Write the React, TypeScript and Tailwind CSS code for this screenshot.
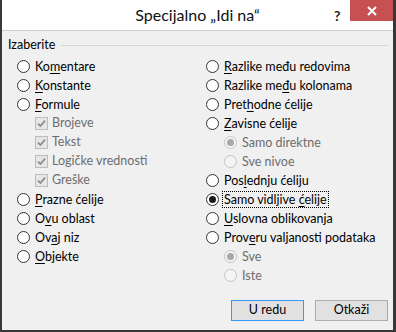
import type { ReactNode } from 'react';

const FONT = { fontFamily: '"Segoe UI", Lato, "Noto Sans", sans-serif' };

function Etiketa({ tekst, podvuci, onemoguceno }: { tekst: string; podvuci?: number; onemoguceno?: boolean }) {
  if (podvuci === undefined || onemoguceno) return <span>{tekst}</span>;
  return (
    <span>
      {tekst.slice(0, podvuci)}
      <span className="underline underline-offset-2">{tekst.slice(podvuci, podvuci + 1)}</span>
      {tekst.slice(podvuci + 1)}
    </span>
  );
}

function Radio({
  tekst,
  podvuci,
  izabrano = false,
  onemoguceno = false,
  fokus = false,
}: {
  tekst: string;
  podvuci?: number;
  izabrano?: boolean;
  onemoguceno?: boolean;
  fokus?: boolean;
}) {
  return (
    <div className="flex h-[19px] items-center">
      <div
        className={`flex h-[13px] w-[13px] shrink-0 items-center justify-center rounded-full border ${
          onemoguceno ? 'border-[#c4c4c4] bg-[#f4f4f4]' : 'border-[#333333] bg-white'
        }`}
      >
        {izabrano && (
          <div className={`h-[7px] w-[7px] rounded-full ${onemoguceno ? 'bg-[#a8a8a8]' : 'bg-[#1a1a1a]'}`} />
        )}
      </div>
      <div
        className={`ml-[3px] px-[1px] leading-[15px] ${
          fokus ? 'border border-dotted border-black' : 'border border-transparent'
        } ${onemoguceno ? 'text-[#6d6d6d]' : 'text-black'}`}
      >
        <Etiketa tekst={tekst} podvuci={podvuci} onemoguceno={onemoguceno} />
      </div>
    </div>
  );
}

function Polje({ tekst }: { tekst: string }) {
  return (
    <div className="flex h-[19px] items-center">
      <div className="flex h-[13px] w-[13px] shrink-0 items-center justify-center border border-[#bcbcbc] bg-[#e6e6e6]">
        <svg width="9" height="9" viewBox="0 0 9 9">
          <path d="M1 4.6 L3.4 7 L8 1.6" fill="none" stroke="#8d8d8d" strokeWidth="1.8" />
        </svg>
      </div>
      <span className="ml-[4px] text-[#6d6d6d]">{tekst}</span>
    </div>
  );
}

function Uvuceno({ children }: { children: ReactNode }) {
  return <div className="pl-[18px]">{children}</div>;
}

export default function App() {
  return (
    <div
      className="box-border flex h-[332px] w-[396px] flex-col border-b-2 border-l-2 border-r-[3px] border-[#383838] bg-[#f0f0f0] text-[12.5px]"
      style={FONT}
    >
      <div className="relative flex h-[31px] shrink-0 items-center justify-center border-b border-[#cfcfcf] bg-white">
        <span className="pb-[1px] text-[16px] text-[#111]">Specijalno „Idi na“</span>
        <span className="absolute left-[332px] top-[5px] text-[14px] font-bold text-[#222]">?</span>
        <div className="absolute right-0 top-0 flex h-[21px] w-[43px] items-center justify-center bg-[#c75050]">
          <svg width="10" height="10" viewBox="0 0 10 10">
            <path d="M1 1 L9 9 M9 1 L1 9" stroke="white" strokeWidth="2" />
          </svg>
        </div>
      </div>

      <div className="flex flex-1 flex-col pt-[6px]">
        <div className="flex h-[16px] items-center pl-[6px] pr-[5px]">
          <span className="text-black">Izaberite</span>
          <div className="ml-[6px] h-px flex-1 bg-[#d5d5d5]" />
        </div>

        <div className="mt-[4px] flex">
          <div className="w-[204px] pl-[15px]">
            <Radio tekst="Komentare" podvuci={2} />
            <Radio tekst="Konstante" podvuci={0} />
            <Radio tekst="Formule" podvuci={0} />
            <Uvuceno>
              <Polje tekst="Brojeve" />
              <Polje tekst="Tekst" />
              <Polje tekst="Logičke vrednosti" />
              <Polje tekst="Greške" />
            </Uvuceno>
            <Radio tekst="Prazne ćelije" podvuci={0} />
            <Radio tekst="Ovu oblast" podvuci={1} />
            <Radio tekst="Ovaj niz" podvuci={2} />
            <Radio tekst="Objekte" podvuci={0} />
          </div>
          <div className="flex-1">
            <Radio tekst="Razlike među redovima" podvuci={0} />
            <Radio tekst="Razlike među kolonama" podvuci={10} />
            <Radio tekst="Prethodne ćelije" podvuci={4} />
            <Radio tekst="Zavisne ćelije" podvuci={0} />
            <Uvuceno>
              <Radio tekst="Samo direktne" izabrano onemoguceno />
              <Radio tekst="Sve nivoe" onemoguceno />
            </Uvuceno>
            <Radio tekst="Poslednju ćeliju" podvuci={3} />
            <Radio tekst="Samo vidljive ćelije" podvuci={14} izabrano fokus />
            <Radio tekst="Uslovna oblikovanja" podvuci={0} />
            <Radio tekst="Proveru valjanosti podataka" podvuci={4} />
            <Uvuceno>
              <Radio tekst="Sve" izabrano onemoguceno />
              <Radio tekst="Iste" onemoguceno />
            </Uvuceno>
          </div>
        </div>

        <div className="mt-auto flex justify-end gap-[11px] pb-[9px] pr-[5px]">
          <button className="h-[21px] w-[73px] border border-[#3399ff] bg-[#e1e1e1] text-black">U redu</button>
          <button className="h-[21px] w-[73px] border border-[#adadad] bg-[#e1e1e1] text-black">Otkaži</button>
        </div>
      </div>
    </div>
  );
}
